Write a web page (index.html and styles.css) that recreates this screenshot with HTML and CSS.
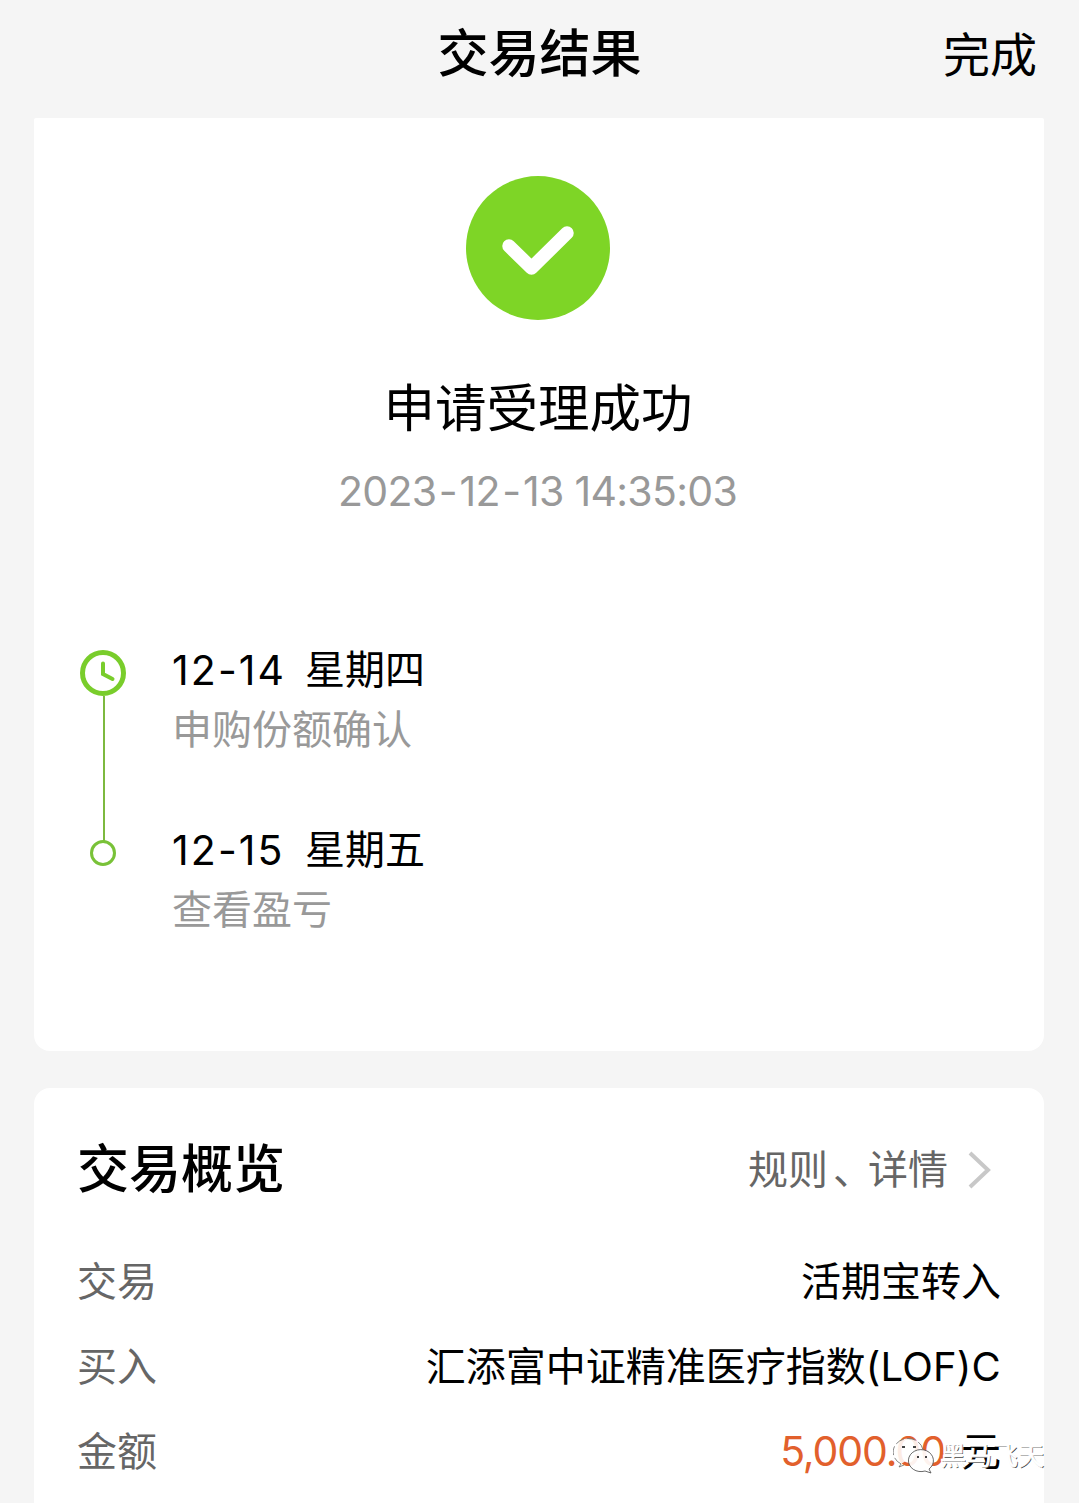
FILE: index.html
```html
<!DOCTYPE html>
<html lang="zh-CN">
<head>
    <meta charset="UTF-8">
    <meta name="viewport" content="width=device-width, initial-scale=1.0">
    <title>交易结果</title>
    <link rel="stylesheet" href="styles.css">
</head>
<body>
<div id="page">
    <header class="header">
        <h1>交易结果</h1>
        <a class="done">完成</a>
    </header>
    <section class="card result">
        <svg class="success" viewBox="0 0 144 144">
            <circle cx="72" cy="72" r="72" fill="#7ed526"/>
            <path d="M43 70L65.500 92L101 57" fill="none" stroke="#fff" stroke-width="13.500" stroke-linecap="round" stroke-linejoin="round"/>
        </svg>
        <h2>申请受理成功</h2>
        <p class="time">2023<i>-</i>12<i>-</i>13 14:35:03</p>
        <ul class="steps">
            <li>
                <div class="mark">
                    <svg class="clock" viewBox="0 0 46 46">
                        <circle cx="23" cy="23" r="20.500" fill="none" stroke="#79cd2b" stroke-width="5"/>
                        <path d="M23 13.500V24L32.500 29" fill="none" stroke="#79cd2b" stroke-width="4" stroke-linecap="round"/>
                    </svg>
                    <i class="line"></i>
                </div>
                <div class="info">
                    <p class="date"><span class="day">12-14</span><span>星期四</span></p>
                    <p class="desc">申购份额确认</p>
                </div>
            </li>
            <li>
                <div class="mark"><i class="dot"></i></div>
                <div class="info">
                    <p class="date"><span class="day">12-15</span><span>星期五</span></p>
                    <p class="desc">查看盈亏</p>
                </div>
            </li>
        </ul>
    </section>
    <section class="card overview">
        <div class="title">
            <h3>交易概览</h3>
            <a class="more"><span>规则<i>、</i>详情</span>
                <svg class="arrow" viewBox="0 0 24 38">
                    <path d="M2 2L20 19L2 36" fill="none" stroke="#c8c8c8" stroke-width="4"/>
                </svg>
            </a>
        </div>
        <dl class="list">
            <div><dt>交易</dt><dd>活期宝转入</dd></div>
            <div><dt>买入</dt><dd>汇添富中证精准医疗指数<span class="code">(LOF)C</span></dd></div>
            <div><dt>金额</dt><dd class="money"><em>5,000.00</em><span>元</span></dd></div>
        </dl>
    </section>
    <div class="watermark">
        <svg viewBox="0 0 42 38">
            <path d="M8 27L6 30L11 28A15 13.500 0 1 1 30 13" fill="#fff" fill-opacity=".88" stroke="#666" stroke-width=".8" stroke-dasharray="9 3"/>
            <path d="M36 32L38 36L32 34A12.500 11 0 1 1 36 32Z" fill="#fff" fill-opacity=".92" stroke="#444" stroke-width=".8"/>
            <path d="M9 10H12M20 10H23M24 20H26M32 20H34" stroke="#444" stroke-width="2"/>
        </svg>
        <span>黑马飞天</span>
    </div>
</div>
</body>
</html>
```
FILE: styles.css
```css
body {
    margin: 0;
    background: #f5f5f5;
    color: #000;
    font-family: Inter, "Noto Sans CJK SC", sans-serif;
}

h1, h2, h3, p, ul, dl, dd {
    margin: 0;
    padding: 0;
    list-style: none;
}

i, em {
    font-style: normal;
}

#page {
    position: relative;
    height: 1503px;
    overflow: hidden;
}

.header {
    display: grid;
    grid-template-columns: 1fr auto 1fr;
    align-items: center;
    height: 118px;
    padding: 0 42px;
    box-sizing: border-box;
}

.header h1 {
    grid-column: 2;
    margin-bottom: 10px;
    font-size: 51px;
    line-height: 60px;
    font-weight: 500;
}

.done {
    justify-self: end;
    margin-bottom: 9px;
    font-size: 47px;
    line-height: 60px;
}

.card {
    margin: 0 35px 0 34px;
    background: #fff;
    box-sizing: border-box;
}

.result {
    height: 933px;
    padding-top: 58px;
    border-radius: 2px 2px 16px 16px;
    text-align: center;
}

.success {
    display: block;
    width: 144px;
    height: 144px;
    margin: 0 auto;
    transform: translateX(-1px);
}

.result h2 {
    margin: 56px 2px 0 0;
    font-size: 51.5px;
    line-height: 64px;
    font-weight: 400;
}

.time {
    margin: 26px 3px 0 0;
    font-size: 41px;
    line-height: 50px;
    letter-spacing: -.7px;
    color: #999;
}

.time i {
    margin: 0 2.5px;
}

.steps {
    margin-top: 128px;
    padding-left: 46px;
    text-align: left;
}

.steps li {
    display: flex;
    height: 180px;
}

.mark {
    display: flex;
    flex-direction: column;
    align-items: center;
    width: 46px;
    padding-top: 6px;
}

.clock {
    flex: none;
    width: 46px;
    height: 46px;
}

.line {
    flex: none;
    width: 2px;
    height: 145px;
    margin-left: 1px;
    background: #7db93f;
}

.dot {
    width: 20px;
    height: 20px;
    margin-top: 10px;
    border: 3px solid #79c238;
    border-radius: 50%;
}

.info {
    padding-left: 46px;
}

.date {
    display: flex;
    font-size: 40px;
    line-height: 52px;
}

.day {
    width: 133px;
    font-size: 41px;
    letter-spacing: 2.1px;
}

.desc {
    margin-top: 8px;
    font-size: 40px;
    line-height: 52px;
    color: #999;
}

.overview {
    height: 440px;
    margin-top: 37px;
    padding: 47px 43px 0 44px;
    border-radius: 16px;
}

.title {
    display: flex;
    justify-content: space-between;
    align-items: center;
    height: 70px;
}

.title h3 {
    margin-left: -1px;
    font-size: 52px;
    line-height: 70px;
    font-weight: 500;
}

.more {
    display: flex;
    align-items: center;
    gap: 20px;
    margin-right: 9px;
    font-size: 40px;
    line-height: 52px;
    color: #666;
}

.more i {
    margin: 0 -5px 0 5px;
}

.arrow {
    width: 24px;
    height: 38px;
}

.list {
    margin-top: 34px;
}

.list div {
    display: flex;
    justify-content: space-between;
    height: 85px;
    font-size: 40px;
    line-height: 85px;
}

.list dt {
    margin-left: -1px;
    color: #666;
}

.code {
    letter-spacing: .2px;
}

.money {
    display: flex;
    gap: 16px;
}

.money em {
    font-size: 41px;
    letter-spacing: -1.1px;
    color: #e2602c;
}

.watermark {
    position: absolute;
    right: 35px;
    bottom: 28px;
    display: flex;
    align-items: center;
    gap: 5px;
    font-size: 26px;
    line-height: 38px;
    color: #fff;
    -webkit-text-stroke: .8px #fff;
    text-shadow: 1px 1px 0 #444;
}

.watermark svg {
    width: 42px;
    height: 38px;
}
```
